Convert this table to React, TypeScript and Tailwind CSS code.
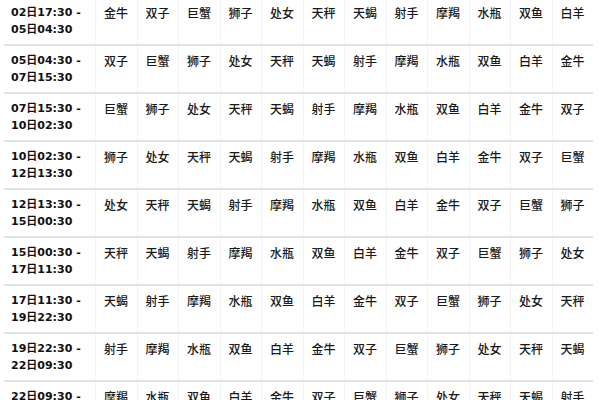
const signs = ["白羊", "金牛", "双子", "巨蟹", "狮子", "处女", "天秤", "天蝎", "射手", "摩羯", "水瓶", "双鱼"];

const rows = [
  ["02日17:30 -", "05日04:30"],
  ["05日04:30 -", "07日15:30"],
  ["07日15:30 -", "10日02:30"],
  ["10日02:30 -", "12日13:30"],
  ["12日13:30 -", "15日00:30"],
  ["15日00:30 -", "17日11:30"],
  ["17日11:30 -", "19日22:30"],
  ["19日22:30 -", "22日09:30"],
  ["22日09:30 -", "24日20:30"],
];

export default function App() {
  return (
    <div className="w-[600px] h-[400px] overflow-hidden bg-white">
      <div className="-mt-[4px] ml-[4px] w-[589px]">
        {rows.map((r, i) => (
          <div
            key={i}
            className="grid grid-cols-[91px_repeat(12,_1fr)] h-[48px] border-t-2 border-[#e2e2e2]"
          >
            <div className="pl-[7px] pt-[6px] text-[11px] leading-[17px] font-bold text-[#111] font-['DejaVu_Sans','Noto_Sans_CJK_SC',sans-serif]">
              <div>{r[0]}</div>
              <div>{r[1]}</div>
            </div>
            {Array.from({ length: 12 }).map((_, j) => (
              <div
                key={j}
                className="border-l border-[#f3f3f3] pl-[8px] pt-[6px] text-[12px] leading-[17px] font-medium text-[#1a1a1a] font-['Noto_Sans_CJK_SC',sans-serif]"
              >
                {signs[(i + 1 + j) % 12]}
              </div>
            ))}
          </div>
        ))}
      </div>
    </div>
  );
}
